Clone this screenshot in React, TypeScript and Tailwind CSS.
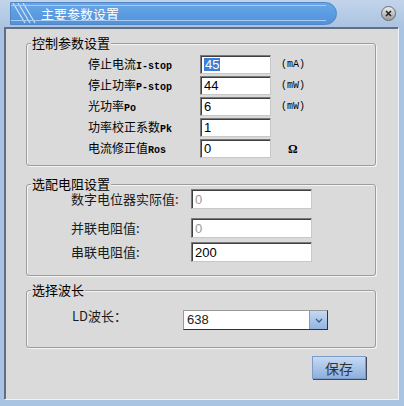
import React from "react";

const cjk = { fontFamily: '"Noto Sans CJK SC", "Liberation Sans", sans-serif' };
const mono = { fontFamily: '"Liberation Mono", "Noto Sans CJK SC", monospace' };

function Field({ value, selected, disabled, w = "w-[71px]", h = "h-[19px]" }: { value: string; selected?: boolean; disabled?: boolean; w?: string; h?: string }) {
  return (
    <div
      className={`${w} ${h} bg-white border border-t-[#7a7a7a] border-l-[#7a7a7a] border-b-[#c8c8c8] border-r-[#c8c8c8] shadow-[inset_1px_1px_0_#404040] flex items-center pl-[3px] text-[13px] leading-none ${disabled ? "text-[#9a9a9a]" : "text-black"}`}
      style={{ fontFamily: '"Liberation Sans", sans-serif' }}
    >
      {selected ? <span className="bg-[#3a7fd5] text-white px-[1px]">{value}</span> : <span>{value}</span>}
    </div>
  );
}

function Group({ title, className, children }: { title: string; className: string; children: React.ReactNode }) {
  return (
    <div className={`relative border border-[#9c9c9c] rounded-[3px] shadow-[1px_1px_0_#f4f4f4,inset_1px_1px_0_#f4f4f4] ${className}`}>
      <span className="absolute left-[4px] top-[-9px] bg-[#dadada] px-[1px] text-[13px] leading-[16px] text-black" style={cjk}>
        {title}
      </span>
      {children}
    </div>
  );
}

function MixedLabel({ cn, latin }: { cn: string; latin: string }) {
  return (
    <span className="w-[112px] text-black leading-none whitespace-nowrap flex items-baseline">
      <span className="text-[12px]" style={cjk}>{cn}</span>
      <span className="text-[10px] font-bold" style={mono}>{latin}</span>
    </span>
  );
}

export default function App() {
  const rows1 = [
    { cn: "停止电流", latin: "I-stop", value: "45", unit: "(mA)", selected: true },
    { cn: "停止功率", latin: "P-stop", value: "44", unit: "(mW)" },
    { cn: "光功率", latin: "Po", value: "6", unit: "(mW)" },
    { cn: "功率校正系数", latin: "Pk", value: "1", unit: "" },
    { cn: "电流修正值", latin: "Ros", value: "0", unit: "Ω" },
  ];
  return (
    <div className="w-[404px] h-[406px] bg-[#a9c3e2] flex flex-col overflow-hidden">
      {/* title bar */}
      <div className="h-[27px] flex items-center bg-gradient-to-b from-[#c2d4ea] to-[#abc3e1] pl-[10px] pr-[8px]">
        <div className="relative h-[23px] w-[327px] rounded-r-[12px] bg-gradient-to-b from-[#6aa6e8] via-[#5b9ce2] to-[#5492d8] border border-[#4f86c6] flex items-center overflow-hidden">
          <div className="absolute left-0 right-[10px] top-[2px] h-px bg-[#a9cdf2]" />
          <div className="absolute left-0 right-[10px] bottom-[3px] h-px bg-[#a9cdf2]" />
          <svg width="30" height="23" viewBox="0 0 30 23" className="shrink-0">
            <path d="M2 1 L14 21 M7 1 L19 21 M12 1 L24 21" stroke="#cfe2f7" strokeWidth="1.2" />
          </svg>
          <span className="text-white text-[13px] leading-none" style={cjk}>主要参数设置</span>
        </div>
        <div className="ml-auto w-[15px] h-[15px] rounded-full bg-gradient-to-b from-[#eeeeee] to-[#9a9a9a] border border-[#6a6a6a] flex items-center justify-center">
          <svg width="7" height="7" viewBox="0 0 7 7">
            <path d="M1 1 L6 6 M6 1 L1 6" stroke="#222" strokeWidth="1.6" />
          </svg>
        </div>
      </div>
      {/* client */}
      <div className="ml-[4px] mr-[6px] h-[372px] bg-[#dadada] border-t-2 border-l-2 border-t-[#5f6f84] border-l-[#5f6f84] shadow-[1px_1px_0_#eef4fb] pl-[20px] pr-[22px] pt-[14px] flex flex-col">
        <Group title="控制参数设置" className="h-[123px]">
          <div className="pt-[11px] pl-[61px] flex flex-col gap-[2px]">
            {rows1.map((r) => (
              <div key={r.cn} className="flex items-center h-[19px]">
                <MixedLabel cn={r.cn} latin={r.latin} />
                <Field value={r.value} selected={r.selected} />
                {r.unit === "Ω" ? (
                  <span className="ml-[17px] text-[12px] font-bold text-black" style={{ fontFamily: '"Liberation Serif", serif' }}>Ω</span>
                ) : (
                  <span className="ml-[10px] text-[10px] text-black" style={mono}>{r.unit}</span>
                )}
              </div>
            ))}
          </div>
        </Group>
        <Group title="选配电阻设置" className="mt-[18px] h-[92px]">
          <div className="pt-[4px] pl-[44px] flex flex-col">
            <div className="flex items-center h-[20px]">
              <span className="w-[120px] text-[13px] text-[#1a1a1a]" style={cjk}>数字电位器实际值:</span>
              <Field value="0" disabled w="w-[121px]" h="h-[20px]" />
            </div>
            <div className="flex items-center h-[20px] mt-[9px]">
              <span className="w-[120px] text-[13px] text-[#1a1a1a]" style={cjk}>并联电阻值:</span>
              <Field value="0" disabled w="w-[121px]" h="h-[20px]" />
            </div>
            <div className="flex items-center h-[20px] mt-[4px]">
              <span className="w-[120px] text-[13px] text-[#1a1a1a]" style={cjk}>串联电阻值:</span>
              <Field value="200" w="w-[121px]" h="h-[20px]" />
            </div>
          </div>
        </Group>
        <Group title="选择波长" className="mt-[14px] h-[58px]">
          <div className="pt-[19px] pl-[45px] flex items-center">
            <span className="w-[111px] text-[13px] text-[#1a1a1a] -mt-[9px]" style={cjk}>LD波长：</span>
            <div className="flex h-[20px] w-[145px] border border-t-[#9a9a9a] border-l-[#9a9a9a] border-b-[#333] border-r-[#333]">
              <div className="flex-1 bg-white flex items-center pl-[3px] text-[13px] text-[#222]" style={{ fontFamily: '"Liberation Sans", sans-serif' }}>638</div>
              <div className="w-[18px] bg-gradient-to-b from-[#c4d8f2] to-[#93b5e0] border-l border-[#7d9cc6] flex items-center justify-center">
                <svg width="8" height="5" viewBox="0 0 8 5">
                  <path d="M1 1 L4 4 L7 1" stroke="#3c5a86" strokeWidth="1.3" fill="none" />
                </svg>
              </div>
            </div>
          </div>
        </Group>
        <div className="flex justify-end mt-[8px] pr-[10px]">
          <button className="w-[54px] h-[23px] bg-gradient-to-b from-[#c6daf3] to-[#8eb0dc] border border-[#7b9cc8] shadow-[1px_1px_0_#404a58] text-[14px] text-[#333] leading-none" style={cjk}>
            保存
          </button>
        </div>
      </div>
    </div>
  );
}
